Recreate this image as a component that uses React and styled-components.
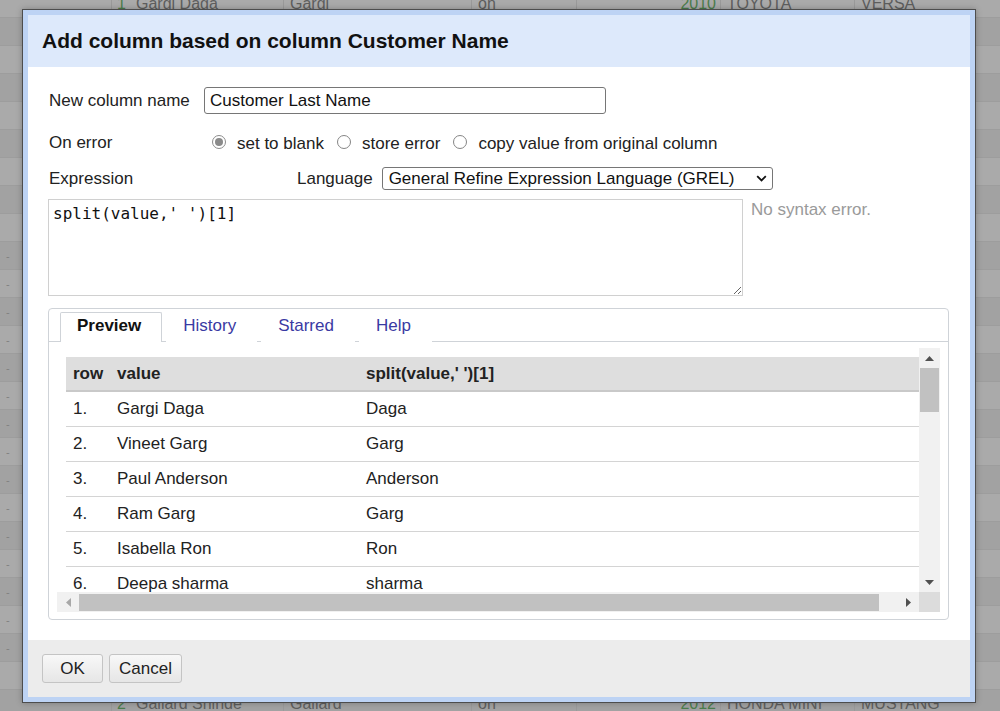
import React from 'react';
import styled, { createGlobalStyle } from 'styled-components';

const GlobalStyle = createGlobalStyle`
  html, body { margin: 0; padding: 0; }
  body {
    width: 1000px;
    height: 711px;
    overflow: hidden;
    font-family: "Liberation Sans", Arial, sans-serif;
  }
  * { box-sizing: border-box; }
`;

const Page = styled.div`
  position: relative;
  width: 1000px;
  height: 711px;
  overflow: hidden;
  background: #a6a6a6;
`;

/* ---------- background spreadsheet ---------- */
const Sheet = styled.div`
  display: flex;
  flex-direction: column;
  margin-top: -10px;
`;

const SheetRow = styled.div`
  display: grid;
  grid-template-columns: 112px 18px 154px 188px 105px 144px 134px 1fr;
  height: 28px;
  background: ${(p) => (p.$alt ? '#a2a2a2' : '#aaaaaa')};
  border-bottom: 1px solid #9d9d9d;
  font-size: 16px;
  color: #5e5e5e;
`;

const SheetCell = styled.div`
  display: flex;
  align-items: center;
  justify-content: ${(p) => (p.$right ? 'flex-end' : 'flex-start')};
  padding: 0 ${(p) => (p.$right ? '4px' : '6px')} 0 ${(p) => (p.$right ? '0' : '6px')};
  border-right: ${(p) => (p.$line ? '1px solid #9a9a9a' : 'none')};
  color: ${(p) => (p.$green ? '#4c7d4c' : 'inherit')};
  white-space: nowrap;
  overflow: hidden;
`;

const Dash = styled.span`
  font-size: 11px;
  color: #808080;
`;

/* ---------- dialog ---------- */
const Dialog = styled.div`
  position: absolute;
  left: 22px;
  top: 9px;
  width: 954px;
  height: 694px;
  border: 1px solid #4d4d4d;
  padding: 5px;
  background: #bdd3f4;
  box-shadow: 0 0 6px rgba(0, 0, 0, 0.25);
`;

const Inner = styled.div`
  display: flex;
  flex-direction: column;
  height: 100%;
`;

const Header = styled.div`
  height: 52px;
  flex: none;
  display: flex;
  align-items: center;
  padding-left: 14px;
  background: #dde9fb;
  font-size: 21px;
  font-weight: bold;
  color: #111;
`;

const Body = styled.div`
  flex: 1;
  min-height: 0;
  background: #fff;
  padding: 20px 21px 0 20px;
  display: flex;
  flex-direction: column;
  font-size: 17px;
  color: #222;
`;

const Row = styled.div`
  display: flex;
  align-items: ${(p) => p.$align || 'center'};
  height: ${(p) => (p.$h ? `${p.$h}px` : 'auto')};
  margin-top: ${(p) => p.$mt || 0}px;
  flex: none;
`;

const Label = styled.div`
  width: ${(p) => p.$w || 156}px;
  padding-left: 1px;
  flex: none;
  white-space: nowrap;
`;

const TextInput = styled.input`
  width: 402px;
  height: 27px;
  border: 1px solid #767676;
  border-radius: 3px;
  padding: 0 5px;
  font-family: "Liberation Sans", Arial, sans-serif;
  font-size: 17px;
  color: #111;
  outline: none;
  background: #fff;
`;

const RadioGroup = styled.div`
  display: flex;
  align-items: center;
  gap: 13px;
  padding-left: 8px;
`;

const RadioItem = styled.label`
  display: flex;
  align-items: center;
  gap: 11px;
  white-space: nowrap;
  padding-top: 2px;
`;

const RadioCircle = styled.span`
  width: 14px;
  height: 14px;
  border-radius: 50%;
  border: 1px solid ${(p) => (p.$checked ? '#8c8c8c' : '#858585')};
  background: #fff;
  display: inline-flex;
  align-items: center;
  justify-content: center;
  flex: none;
  margin-top: -3px;
  &::after {
    content: '';
    width: 8px;
    height: 8px;
    border-radius: 50%;
    background: ${(p) => (p.$checked ? '#8a8a8a' : 'transparent')};
  }
`;

const LangLabel = styled.span`
  margin-right: 9px;
`;

const Select = styled.div`
  width: 391px;
  height: 23px;
  border: 1px solid #767676;
  border-radius: 3px;
  display: flex;
  align-items: center;
  justify-content: space-between;
  padding: 0 5px 0 6px;
  color: #111;
  white-space: nowrap;
`;

const ExprArea = styled.textarea`
  width: 695px;
  height: 97px;
  border: 1px solid #d0d0d0;
  padding: 4px 4px;
  font-family: "DejaVu Sans Mono", "Liberation Mono", monospace;
  font-size: 16px;
  line-height: 20px;
  color: #111;
  outline: none;
  resize: both;
  flex: none;
`;

const Status = styled.div`
  margin-left: 8px;
  margin-top: 1px;
  color: #9a9a9a;
`;

/* ---------- tabs panel ---------- */
const Panel = styled.div`
  margin-top: 12px;
  height: 312px;
  border: 1px solid #cfd3d8;
  border-radius: 4px;
  display: flex;
  flex-direction: column;
  flex: none;
  overflow: hidden;
`;

const TabList = styled.div`
  display: flex;
  align-items: flex-start;
  gap: 4px;
  padding: 3px 0 0 11px;
  height: 33px;
  border-bottom: 1px solid #cfd3d8;
  flex: none;
`;

const Tab = styled.div`
  height: 30px;
  padding: 0 20px 3px 16px;
  display: flex;
  align-items: center;
  font-weight: ${(p) => (p.$active ? 'bold' : 'normal')};
  color: ${(p) => (p.$active ? '#111' : '#3a3aa3')};
  background: #fff;
  border: 1px solid ${(p) => (p.$active ? '#cfd3d8' : 'transparent')};
  border-bottom: none;
  border-radius: 2px 2px 0 0;
  position: relative;
  z-index: 1;
`;

const TabBody = styled.div`
  flex: 1;
  min-height: 0;
  padding: 6px 8px 7px 8px;
  display: flex;
`;

const ScrollBox = styled.div`
  flex: 1;
  min-width: 0;
  min-height: 0;
  display: grid;
  grid-template-columns: minmax(0, 1fr) 21px;
  grid-template-rows: minmax(0, 1fr) 20px;
`;

const Viewport = styled.div`
  overflow: hidden;
  min-height: 0;
  padding: 9px 0 0 9px;
`;

const Table = styled.div`
  width: 880px;
  display: flex;
  flex-direction: column;
`;

const TRow = styled.div`
  display: grid;
  grid-template-columns: 44px 249px 1fr;
  height: 35px;
  align-items: center;
  flex: none;
  background: ${(p) => (p.$head ? '#dedede' : '#fff')};
  border-bottom: ${(p) => (p.$head ? '2px solid #c9c9c9' : '1px solid #d4d4d4')};
  font-weight: ${(p) => (p.$head ? 'bold' : 'normal')};
  color: #222;
`;

const TCell = styled.div`
  padding-left: 7px;
  white-space: nowrap;
`;

const VBar = styled.div`
  background: #f1f1f1;
  display: flex;
  flex-direction: column;
  align-items: center;
  min-height: 0;
`;

const HBar = styled.div`
  background: #f1f1f1;
  display: flex;
  align-items: center;
`;

const Corner = styled.div`
  background: #dcdcdc;
`;

const ArrowBtn = styled.div`
  flex: none;
  width: ${(p) => p.$w}px;
  height: ${(p) => p.$h}px;
  display: flex;
  align-items: center;
  justify-content: center;
`;

const VThumb = styled.div`
  flex: none;
  width: 19px;
  height: 44px;
  background: #c1c1c1;
`;

const HThumb = styled.div`
  flex: none;
  width: 800px;
  height: 17px;
  background: #c1c1c1;
`;

const Spacer = styled.div`
  flex: 1;
`;

/* ---------- footer ---------- */
const Footer = styled.div`
  height: 57px;
  flex: none;
  background: #ececec;
  display: flex;
  align-items: flex-start;
  gap: 6px;
  padding: 14px 0 0 14px;
`;

const Button = styled.button`
  height: 29px;
  min-width: 61px;
  padding: 0 9px;
  border: 1px solid #c4c4c4;
  border-radius: 3px;
  background: linear-gradient(#f8f8f8, #e6e6e6);
  font-family: "Liberation Sans", Arial, sans-serif;
  font-size: 17px;
  color: #222;
`;

const Tri = ({ dir, color = '#505050' }) => {
  const pts = {
    up: '0,5 4.5,0 9,5',
    down: '0,0 4.5,5 9,0',
    left: '5,0 0,4.5 5,9',
    right: '0,0 5,4.5 0,9',
  }[dir];
  const vert = dir === 'up' || dir === 'down';
  return (
    <svg width={vert ? 9 : 5} height={vert ? 5 : 9} viewBox={vert ? '0 0 9 5' : '0 0 5 9'}>
      <polygon points={pts} fill={color} />
    </svg>
  );
};

const rows = [
  ['Gargi Daga', 'Daga'],
  ['Vineet Garg', 'Garg'],
  ['Paul Anderson', 'Anderson'],
  ['Ram Garg', 'Garg'],
  ['Isabella Ron', 'Ron'],
  ['Deepa sharma', 'sharma'],
  ['Rahul Verma', 'Verma'],
];

export default function App() {
  const sheetRows = Array.from({ length: 26 }, (_, i) => {
    let d = ['', '', '', '', '', '', ''];
    if (i === 0) d = ['1', 'Gargi Daga', 'Gargi', 'on', '2010', 'TOYOTA', 'VERSA'];
    if (i === 25) d = ['2', 'Gallard Shinde', 'Gallard', 'on', '2012', 'HONDA MINI', 'MUSTANG'];
    return d;
  });

  return (
    <Page>
      <GlobalStyle />
      <Sheet>
        {sheetRows.map((d, i) => (
          <SheetRow key={i} $alt={i % 2 === 1}>
            <SheetCell $line>{i > 8 && i < 24 ? <Dash>-</Dash> : null}</SheetCell>
            <SheetCell $right $green>{d[0]}</SheetCell>
            <SheetCell $line>{d[1]}</SheetCell>
            <SheetCell $line>{d[2]}</SheetCell>
            <SheetCell $line>{d[3]}</SheetCell>
            <SheetCell $right $green $line>{d[4]}</SheetCell>
            <SheetCell $line>{d[5]}</SheetCell>
            <SheetCell>{d[6]}</SheetCell>
          </SheetRow>
        ))}
      </Sheet>

      <Dialog>
        <Inner>
          <Header>Add column based on column Customer Name</Header>
          <Body>
            <Row $h={27}>
              <Label>New column name</Label>
              <TextInput readOnly value="Customer Last Name" />
            </Row>
            <Row $h={25} $mt={16}>
              <Label>On error</Label>
              <RadioGroup>
                <RadioItem>
                  <RadioCircle $checked />
                  set to blank
                </RadioItem>
                <RadioItem>
                  <RadioCircle />
                  store error
                </RadioItem>
                <RadioItem>
                  <RadioCircle />
                  copy value from original column
                </RadioItem>
              </RadioGroup>
            </Row>
            <Row $h={23} $mt={12}>
              <Label $w={249}>Expression</Label>
              <LangLabel>Language</LangLabel>
              <Select>
                <span>General Refine Expression Language (GREL)</span>
                <svg width="11" height="7" viewBox="0 0 11 7">
                  <polyline points="1.2,1.2 5.5,5.5 9.8,1.2" fill="none" stroke="#111" strokeWidth="1.8" />
                </svg>
              </Select>
            </Row>
            <Row $mt={9} $align="flex-start">
              <ExprArea readOnly value={"split(value,' ')[1]"} />
              <Status>No syntax error.</Status>
            </Row>
            <Panel>
              <TabList>
                <Tab $active>Preview</Tab>
                <Tab>History</Tab>
                <Tab>Starred</Tab>
                <Tab>Help</Tab>
              </TabList>
              <TabBody>
                <ScrollBox>
                  <Viewport>
                    <Table>
                      <TRow $head>
                        <TCell>row</TCell>
                        <TCell>value</TCell>
                        <TCell>split(value,' ')[1]</TCell>
                      </TRow>
                      {rows.map((r, i) => (
                        <TRow key={i}>
                          <TCell>{i + 1}.</TCell>
                          <TCell>{r[0]}</TCell>
                          <TCell>{r[1]}</TCell>
                        </TRow>
                      ))}
                    </Table>
                  </Viewport>
                  <VBar>
                    <ArrowBtn $w={21} $h={20}>
                      <Tri dir="up" />
                    </ArrowBtn>
                    <VThumb />
                    <Spacer />
                    <ArrowBtn $w={21} $h={20}>
                      <Tri dir="down" />
                    </ArrowBtn>
                  </VBar>
                  <HBar>
                    <ArrowBtn $w={22} $h={20}>
                      <Tri dir="left" color="#a8a8a8" />
                    </ArrowBtn>
                    <HThumb />
                    <Spacer />
                    <ArrowBtn $w={22} $h={20}>
                      <Tri dir="right" />
                    </ArrowBtn>
                  </HBar>
                  <Corner />
                </ScrollBox>
              </TabBody>
            </Panel>
          </Body>
          <Footer>
            <Button>OK</Button>
            <Button>Cancel</Button>
          </Footer>
        </Inner>
      </Dialog>
    </Page>
  );
}
